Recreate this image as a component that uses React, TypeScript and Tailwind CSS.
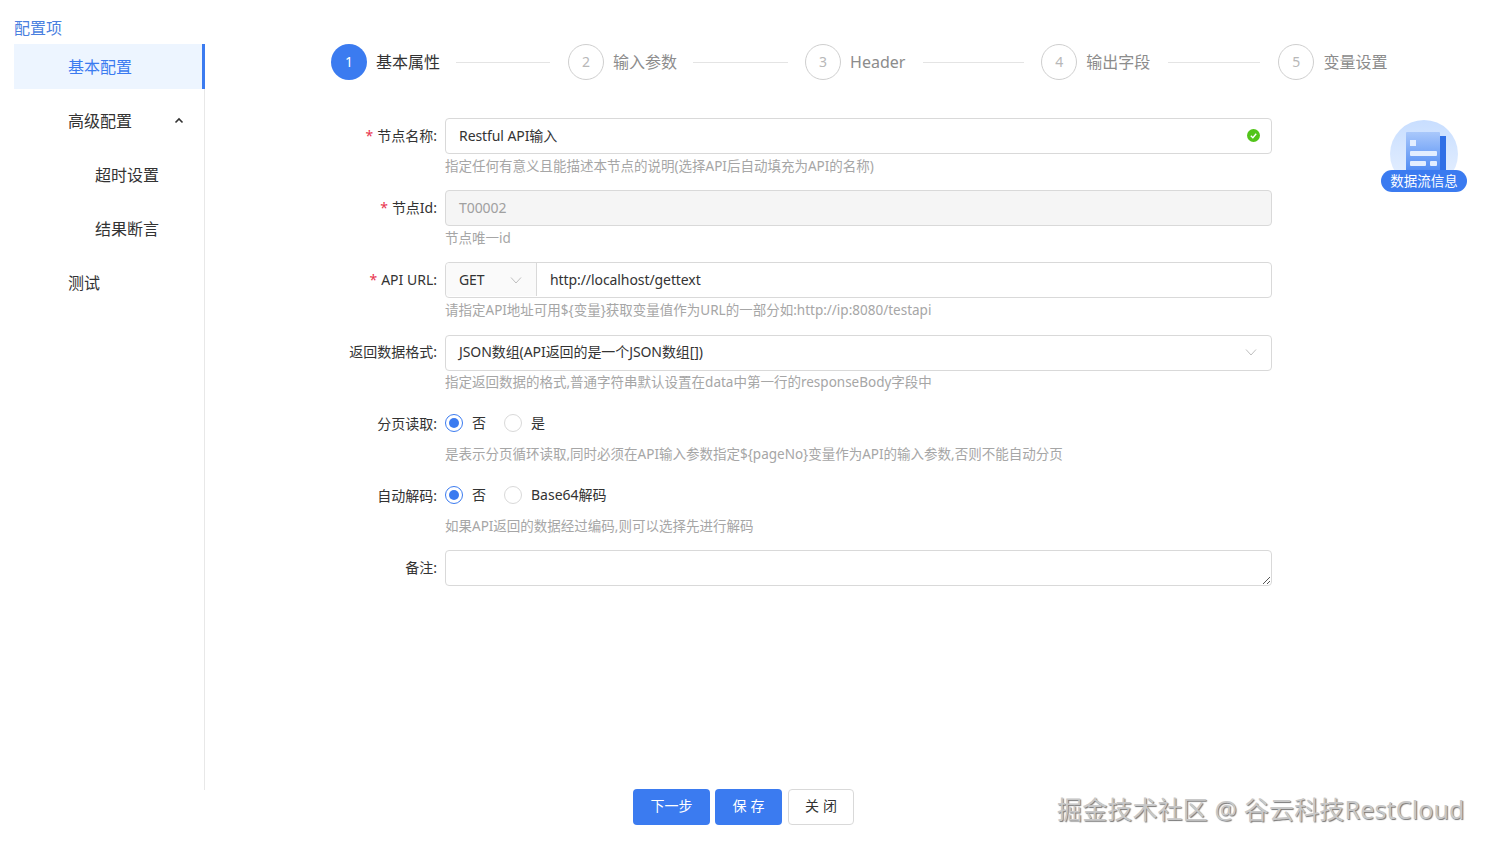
import React from "react";

const font = "font-['Noto_Sans','Noto_Sans_CJK_SC',sans-serif]";

function Steps() {
  const steps = [
    { n: 1, t: "基本属性", line: "w-[94px] ml-4 mr-[18px]" },
    { n: 2, t: "输入参数", line: "w-[95px] ml-4 mr-[17px]" },
    { n: 3, t: "Header", line: "w-[101px] ml-[18px] mr-[17px]" },
    { n: 4, t: "输出字段", line: "w-[92px] ml-[18px] mr-[18px]" },
    { n: 5, t: "变量设置", line: "" },
  ];
  return (
    <div className="flex items-center h-9 mt-11 ml-[126px]">
      {steps.map((s, i) => (
        <div key={s.n} className="flex items-center">
          <div
            className={
              s.n === 1
                ? "w-9 h-9 rounded-full bg-[#3b7bf0] text-white flex items-center justify-center text-sm"
                : "w-9 h-9 rounded-full border border-[#cfcfcf] text-[#b8b8b8] flex items-center justify-center text-sm"
            }
          >
            {s.n}
          </div>
          <span className={s.n === 1 ? "ml-[9px] text-base text-[#333333]" : "ml-[9px] text-base text-[#8c8c8c]"}>{s.t}</span>
          {i < 4 && <div className={`h-px bg-[#e4e4e4] ${s.line}`} />}
        </div>
      ))}
    </div>
  );
}

function Label({ text, req }: { text: string; req?: boolean }) {
  return (
    <div className="w-[240px] h-9 flex items-center justify-end text-sm text-[#333333] shrink-0 pr-2">
      {req && <span className="text-[#e8344e] mr-1 text-sm">*</span>}
      <span>{text}:</span>
    </div>
  );
}

function Help({ children }: { children: React.ReactNode }) {
  return <div className="h-6 flex items-center text-[13.5px] text-[#a6a6a6] whitespace-nowrap">{children}</div>;
}

function Chevron() {
  return (
    <svg width="12" height="12" viewBox="0 0 12 12" fill="none" stroke="#bfbfbf" strokeWidth="1">
      <path d="M1 3.5 L6 9 L11 3.5" />
    </svg>
  );
}

function Row({ label, req, help, children }: { label: string; req?: boolean; help?: string; children: React.ReactNode }) {
  return (
    <div className="flex mb-3">
      <Label text={label} req={req} />
      <div className="w-[827px]">
        {children}
        {help && <Help>{help}</Help>}
      </div>
    </div>
  );
}

function Radio({ on, label }: { on?: boolean; label: string }) {
  return (
    <div className="flex items-center mr-[18px]">
      <div className={on ? "w-[18px] h-[18px] rounded-full border border-[#3b7bf0] flex items-center justify-center" : "w-[18px] h-[18px] rounded-full border border-[#d9d9d9]"}>
        {on && <div className="w-2.5 h-2.5 rounded-full bg-[#3b7bf0]" />}
      </div>
      <span className="ml-[9px] text-sm text-[#333333]">{label}</span>
    </div>
  );
}

const box = "h-9 border border-[#d9d9d9] rounded flex items-center text-sm tracking-[-0.08px]";

function Form() {
  return (
    <div className="mt-[38px]">
      <Row label="节点名称" req help="指定任何有意义且能描述本节点的说明(选择API后自动填充为API的名称)">
        <div className={`${box} pb-px text-[#333333] justify-between pl-[13px] pr-[11px]`}>
          <span>Restful API输入</span>
          <span className="w-[13px] h-[13px] rounded-full bg-[#52c41a] flex items-center justify-center">
            <svg width="9" height="9" viewBox="0 0 10 10" fill="none" stroke="#ffffff" strokeWidth="1.5"><path d="M2 5.2 L4.3 7.4 L8 3" /></svg>
          </span>
        </div>
      </Row>
      <Row label="节点Id" req help="节点唯一id">
        <div className={`${box} pb-px bg-[#f5f5f5] pl-[13px] text-[#a0a0a0]`}>T00002</div>
      </Row>
      <Row label="API URL" req help="请指定API地址可用${变量}获取变量值作为URL的一部分如:http://ip:8080/testapi">
        <div className={`${box} pb-px text-[#333333]`}>
          <div className="w-[91px] h-full bg-[#fafafa] border-r border-[#d9d9d9] rounded-l flex items-center justify-between pl-[13px] pr-[14px]">
            <span>GET</span>
            <Chevron />
          </div>
          <span className="pl-[13px]">http://localhost/gettext</span>
        </div>
      </Row>
      <Row label="返回数据格式" help="指定返回数据的格式,普通字符串默认设置在data中第一行的responseBody字段中">
        <div className={`${box} pb-[3px] text-[#333333] mt-px -mb-px justify-between pl-[13px] pr-[14px]`}>
          <span>JSON数组(API返回的是一个JSON数组[])</span>
          <Chevron />
        </div>
      </Row>
      <Row label="分页读取" help="是表示分页循环读取,同时必须在API输入参数指定${pageNo}变量作为API的输入参数,否则不能自动分页">
        <div className="h-9 pb-0.5 flex items-center">
          <Radio on label="否" />
          <Radio label="是" />
        </div>
      </Row>
      <Row label="自动解码" help="如果API返回的数据经过编码,则可以选择先进行解码">
        <div className="h-9 pb-0.5 flex items-center">
          <Radio on label="否" />
          <Radio label="Base64解码" />
        </div>
      </Row>
      <Row label="备注">
        <div className="h-9 border border-[#d9d9d9] rounded flex justify-end items-end">
          <svg width="10" height="10" viewBox="0 0 10 10" fill="none" stroke="#555555" strokeWidth="1"><path d="M9 2 L2 9 M9 6 L6 9" /></svg>
        </div>
      </Row>
    </div>
  );
}

function Sidebar() {
  const cls = "h-[45px] flex items-center text-base mb-[9px]";
  return (
    <aside className="w-[205px] shrink-0 pl-[14px] pt-[15px]">
      <div className="h-[29px] flex items-center text-base text-[#4a7fdf] pb-1">配置项</div>
      <div className="border-r border-[#e8e8e8] h-[746px]">
        <div className={`${cls} pl-[54px] bg-[#edf5ff] text-[#3b7bf0] border-r-[3px] border-[#3b7bf0] -mr-px`}>基本配置</div>
        <div className={`${cls} pl-[54px] justify-between pr-[20px] text-[#333333]`}>
          <span>高级配置</span>
          <svg width="10" height="10" viewBox="0 0 10 10" fill="none" stroke="#333333" strokeWidth="1.6"><path d="M1.5 6.5 L5 3 L8.5 6.5" /></svg>
        </div>
        <div className={`${cls} pl-[81px] text-[#333333]`}>超时设置</div>
        <div className={`${cls} pl-[81px] text-[#333333]`}>结果断言</div>
        <div className={`${cls} pl-[54px] text-[#333333]`}>测试</div>
      </div>
    </aside>
  );
}

export default function App() {
  return (
    <div className={`relative w-[1488px] h-[848px] bg-white overflow-hidden ${font}`}>
      <div className="flex h-[789px]">
        <Sidebar />
        <main className="flex-1 min-w-0">
          <Steps />
          <Form />
        </main>
      </div>
      <div className="flex justify-center text-sm pr-px">
        <button className="w-[77px] h-9 pb-0.5 bg-[#3b7bf0] text-white rounded">下一步</button>
        <button className="w-[67px] h-9 pb-0.5 pl-1 ml-[5px] bg-[#3b7bf0] text-white rounded tracking-[4px]">保存</button>
        <button className="w-[66px] h-9 pb-0.5 pl-1 ml-[6px] bg-white text-[#333333] border border-[#d9d9d9] rounded tracking-[4px]">关闭</button>
      </div>

      <div className="absolute left-[1381px] top-[120px] w-[86px] h-[72px]">
        <div className="absolute left-[9px] top-0 w-[68px] h-[68px] rounded-full bg-gradient-to-b from-[#c8deff] to-[#e8f1ff]" />
        <svg className="absolute left-[25px] top-[12px]" width="42" height="48" viewBox="0 0 42 48">
          <defs>
            <linearGradient id="doc" x1="0" y1="0" x2="0" y2="1">
              <stop offset="0" stopColor="#a9c8fb" />
              <stop offset="1" stopColor="#3f80f2" />
            </linearGradient>
          </defs>
          <rect x="34" y="4" width="6" height="38" fill="#2f6fe6" />
          <rect x="0" y="0" width="34" height="46" rx="1" fill="url(#doc)" />
          <rect x="4" y="8" width="6" height="6" fill="#e3eeff" />
          <rect x="4" y="19" width="27" height="5" rx="1" fill="#e3eeff" />
          <rect x="4" y="29" width="16" height="5" rx="1" fill="#e3eeff" />
          <rect x="24" y="29" width="7" height="5" rx="1" fill="#e3eeff" />
        </svg>
        <div className="absolute left-0 top-[50px] w-[86px] h-[22px] rounded-full bg-[#3b7bf0] text-white text-[13.5px] flex items-center justify-center">数据流信息</div>
      </div>

      <div className="absolute left-[1057px] top-[791px] text-[25px] leading-9 tracking-[0.15px] text-[#c8c8c8] [text-shadow:1px_1px_1px_#777777] whitespace-nowrap">掘金技术社区 @ 谷云科技RestCloud</div>
    </div>
  );
}
